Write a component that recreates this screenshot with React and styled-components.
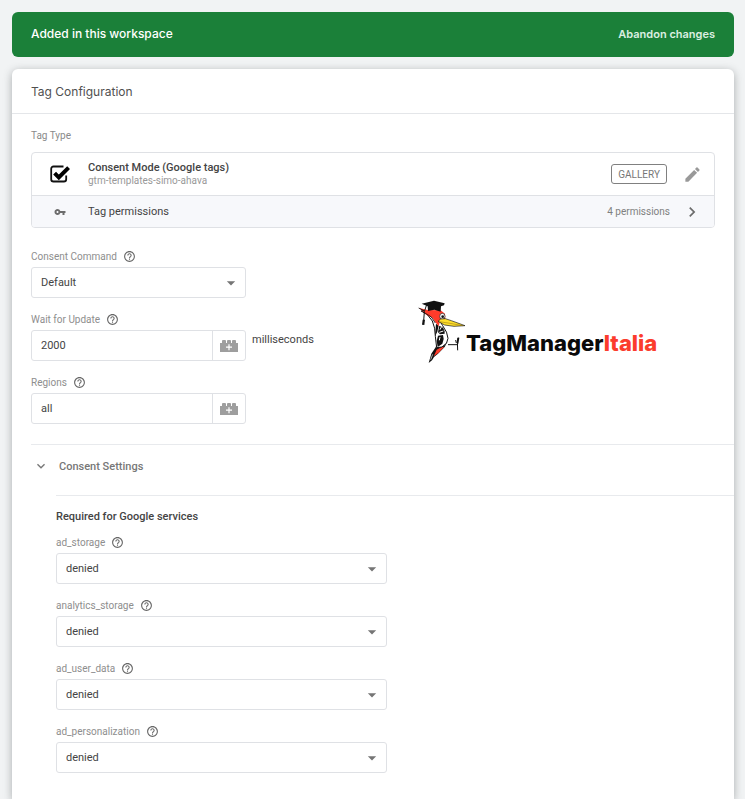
import React, { useState } from 'react'
import styled, { createGlobalStyle } from 'styled-components'
import {
  MdArrowDropDown,
  MdChevronRight,
  MdEdit,
  MdExpandMore,
  MdHelpOutline,
  MdVpnKey,
} from 'react-icons/md'

const consentTypes = ['ad_storage', 'analytics_storage', 'ad_user_data', 'ad_personalization']

const CheckIcon = () => (
  <svg width='20' height='18' viewBox='0 0 20 18' fill='none' aria-hidden='true'>
    <path d='M13.5 1.5H3.5a2.3 2.3 0 0 0-2.3 2.3v10.4a2.3 2.3 0 0 0 2.3 2.3h10.4a2.3 2.3 0 0 0 2.3-2.3V10.5' stroke='#111' strokeWidth='1.8' />
    <path d='M4.6 8.2l4.2 4.2L18.6 2.6' stroke='#000' strokeWidth='4' />
  </svg>
)

const BrickIcon = () => (
  <svg width='18' height='12' viewBox='0 0 18 12' aria-hidden='true'>
    <path d='M0 3h2V1q0-1 1-1h2q1 0 1 1v2h1V1q0-1 1-1h2q1 0 1 1v2h1V1q0-1 1-1h2q1 0 1 1v2h2v9H0z' fill='#9e9e9e' />
    <path d='M9 4.2v6M6 7.2h6' stroke='#fff' strokeWidth='1.2' />
  </svg>
)

const Woodpecker = () => (
  <svg width='48' height='65' viewBox='24 15 144 195' aria-hidden='true'>
    {/* tail */}
    <path d='M84 140L76 158L64 176L56 204L66 196L72 186L84 176L104 156L112 140Z' fill='#111' />
    <path d='M80 164L74 178L71 184L86 173L102 156L96 155Z' fill='#ff3b2a' />
    <path d='M68 178L62 194' stroke='#fff' strokeWidth='2' />
    {/* body */}
    <path d='M38 50Q55 58 67 78Q76 98 76 124L80 158L96 156Q114 146 114 130Q113 112 98 92L80 62Z' fill='#fff' stroke='#111' strokeWidth='3' />
    <path d='M78 86L75 124L82 110L86 92Z' fill='#111' />
    <path d='M88 92L99 98Q106 108 104 116L90 118L84 112Z' fill='#111' />
    <path d='M88 112L100 108M94 96L90 104' stroke='#fff' strokeWidth='3' />
    <path d='M84 122L99 120L101 132L97 146L83 156L80 138Z' fill='#111' />
    <path d='M90 126L88 136' stroke='#fff' strokeWidth='3' />
    {/* head and crest */}
    <path d='M27 39L54 45L92 46L105 56L106 72L90 79L86 94L75 80L68 69L50 60Z' fill='#ff3b2a' />
    <path d='M26 39L42 47L33 48L48 56L64 66L76 84' fill='none' stroke='#111' strokeWidth='2.5' />
    <ellipse cx='97' cy='64' rx='8' ry='9' fill='#fff' stroke='#111' strokeWidth='2' />
    <circle cx='98' cy='65' r='4' fill='#111' />
    {/* beak */}
    <path d='M84 79L92 72L106 71L124 77L165 92L132 94L104 90Z' fill='#ffdf2b' stroke='#111' strokeWidth='2' />
    <path d='M88 80L120 85L158 92' fill='none' stroke='#8a6b10' strokeWidth='1.5' />
    {/* graduation cap */}
    <path d='M35 26L72 17L104 25L102 31L93 34L92 50L73 44L54 48L53 34Z' fill='#111' />
    <path d='M50 29L43 50L41 78' fill='none' stroke='#111' strokeWidth='3' />
    <path d='M38 74L45 74L43 90L36 89Z' fill='#111' />
    {/* feet */}
    <path d='M114 149H143M145 128L142 138L143 166M137 135L139 144' fill='none' stroke='#111' strokeWidth='3' />
    <path d='M142 128H148L145 146H141Z' fill='#111' />
  </svg>
)

const HelpLabel = ({ id, children }) => (
  <LabelRow>
    <Label htmlFor={id}>{children}</Label>
    <HelpButton type='button' aria-label={`Help: ${children}`}>
      <MdHelpOutline size={13} />
    </HelpButton>
  </LabelRow>
)

const SelectField = ({ label, options }) => {
  const [value, setValue] = useState(options[0])
  return (
    <Field>
      <HelpLabel id={label}>{label}</HelpLabel>
      <SelectBox>
        <Select id={label} value={value} onChange={(e) => setValue(e.target.value)}>
          {options.map((option) => <option key={option}>{option}</option>)}
        </Select>
        <MdArrowDropDown size={20} />
      </SelectBox>
    </Field>
  )
}

const VariableField = ({ label, initial, unit }) => {
  const [value, setValue] = useState(initial)
  return (
    <Field>
      <HelpLabel id={label}>{label}</HelpLabel>
      <InputRow>
        <InputBox>
          <Input id={label} value={value} onChange={(e) => setValue(e.target.value)} />
          <VariableButton type='button' aria-label='Insert variable'><BrickIcon /></VariableButton>
        </InputBox>
        {unit && <Unit>{unit}</Unit>}
      </InputRow>
    </Field>
  )
}

const App = () => {
  const [open, setOpen] = useState(true)

  return (
    <Page>
      <GlobalStyle />
      <Banner>
        <BannerText>Added in this workspace</BannerText>
        <AbandonButton type='button'>Abandon changes</AbandonButton>
      </Banner>
      <Card>
        <CardHeader><Title>Tag Configuration</Title></CardHeader>
        <Body>
          <Caption>Tag Type</Caption>
          <TypeBox>
            <TypeRow>
              <IconCell><CheckIcon /></IconCell>
              <TypeInfo>
                <TypeName>Consent Mode (Google tags)</TypeName>
                <TypeAuthor>gtm-templates-simo-ahava</TypeAuthor>
              </TypeInfo>
              <GalleryButton type='button'>GALLERY</GalleryButton>
              <EditButton type='button' aria-label='Edit tag type'><MdEdit size={19} /></EditButton>
            </TypeRow>
            <PermissionsRow type='button'>
              <IconCell><MdVpnKey size={12} /></IconCell>
              <PermissionsName>Tag permissions</PermissionsName>
              <PermissionsCount>4 permissions</PermissionsCount>
              <MdChevronRight size={20} />
            </PermissionsRow>
          </TypeBox>

          <Settings>
            <Fields>
              <SelectField label='Consent Command' options={['Default', 'Update']} />
              <VariableField label='Wait for Update' initial='2000' unit='milliseconds' />
              <VariableField label='Regions' initial='all' />
            </Fields>
            <Logo>
              <Woodpecker />
              <LogoText>TagManager<span>Italia</span></LogoText>
            </Logo>
          </Settings>

          <Section>
            <SectionToggle type='button' aria-expanded={open} onClick={() => setOpen(!open)}>
              <MdExpandMore size={16} />
              Consent Settings
            </SectionToggle>
            {open && (
              <SectionBody>
                <GroupTitle>Required for Google services</GroupTitle>
                <ConsentFields>
                  {consentTypes.map((type) => (
                    <SelectField key={type} label={type} options={['denied', 'granted']} />
                  ))}
                </ConsentFields>
              </SectionBody>
            )}
          </Section>
        </Body>
      </Card>
    </Page>
  )
}

export default App

const GlobalStyle = createGlobalStyle`
  * {
    box-sizing: border-box;
  }
  body {
    margin: 0;
    background: #f1f3f4;
    color: #444;
    font-family: Roboto, 'Liberation Sans', sans-serif;
    font-size: 11px;
  }
  button, input, select {
    margin: 0;
    padding: 0;
    border: none;
    background: none;
    color: inherit;
    font: inherit;
  }
  button {
    cursor: pointer;
  }
  svg {
    display: block;
    flex: none;
  }
`

const Page = styled.div`
  display: flex;
  flex-direction: column;
  gap: 12px;
  min-height: 100vh;
  padding: 12px 11px 0 12px;
`

const Banner = styled.div`
  display: flex;
  align-items: center;
  justify-content: space-between;
  height: 45px;
  padding: 0 19px 2px;
  border-radius: 6px;
  background: #1b8039;
  color: #fff;
  font-family: Inter, Roboto, sans-serif;
`

const BannerText = styled.span`
  font-size: 12px;
  font-weight: 500;
`

const AbandonButton = styled.button`
  color: #dcefe1;
  font-size: 11px;
  font-weight: 600;
`

const Card = styled.main`
  flex: 1;
  border-radius: 6px 6px 0 0;
  background: #fff;
  box-shadow: 0 2px 8px rgba(60, 64, 67, 0.4);
`

const CardHeader = styled.header`
  display: flex;
  align-items: center;
  height: 45px;
  padding: 0 19px;
  border-bottom: 1px solid #e4e6e9;
`

const Title = styled.h1`
  margin: 0;
  color: #505050;
  font-family: Inter, Roboto, sans-serif;
  font-size: 12px;
  font-weight: 400;
`

const Body = styled.div`
  padding: 14px 0 20px 19px;
`

const Caption = styled.div`
  color: #8a8a8a;
  font-size: 10px;
  line-height: 16px;
`

const TypeBox = styled.section`
  margin: 8px 19px 0 0;
  border: 1px solid #dfe1e5;
  border-radius: 4px;
  overflow: hidden;
`

const TypeRow = styled.div`
  display: flex;
  align-items: center;
  height: 42px;
  padding-right: 12px;
`

const IconCell = styled.span`
  display: flex;
  justify-content: center;
  width: 56px;
`

const TypeInfo = styled.div`
  flex: 1;
`

const TypeName = styled.div`
  font-weight: 500;
  line-height: 14px;
`

const TypeAuthor = styled.div`
  color: #999;
  font-size: 10px;
  line-height: 12px;
`

const GalleryButton = styled.button`
  height: 20px;
  padding: 0 6px;
  border: 1px solid #808080;
  border-radius: 3px;
  color: #777;
  font-size: 10px;
`

const EditButton = styled.button`
  margin-left: 16px;
  color: #999;
`

const PermissionsRow = styled.button`
  display: flex;
  align-items: center;
  width: 100%;
  height: 32px;
  padding-right: 12px;
  border-top: 1px solid #dfe1e5;
  background: #f7f8fb;
  text-align: left;

  svg {
    color: #6c6c6c;
  }
`

const PermissionsName = styled.span`
  flex: 1;
`

const PermissionsCount = styled.span`
  margin-right: 12px;
  color: #808080;
  font-size: 10px;
`

const Settings = styled.div`
  display: flex;
  gap: 72px;
  margin-top: 20px;
`

const Fields = styled.div`
  display: flex;
  flex-direction: column;
  gap: 13px;
  width: 315px;
`

const Field = styled.div`
  display: flex;
  flex-direction: column;
  gap: 3px;
`

const LabelRow = styled.div`
  display: flex;
  align-items: center;
  gap: 6px;
  height: 16px;
`

const Label = styled.label`
  color: #8e8e8e;
  font-size: 10px;
`

const HelpButton = styled.button`
  color: #666;
`

const SelectBox = styled.div`
  position: relative;
  width: 215px;

  svg {
    position: absolute;
    top: 6px;
    right: 5px;
    color: #757575;
    pointer-events: none;
  }
`

const Select = styled.select`
  appearance: none;
  width: 100%;
  height: 31px;
  padding: 0 9px;
  border: 1px solid #dfe1e5;
  border-radius: 3px;
`

const InputRow = styled.div`
  display: flex;
  gap: 6px;
`

const InputBox = styled.div`
  display: flex;
  width: 215px;
  height: 31px;
  border: 1px solid #dfe1e5;
  border-radius: 3px;
`

const Input = styled.input`
  flex: 1;
  min-width: 0;
  padding: 0 9px;
`

const VariableButton = styled.button`
  display: flex;
  align-items: center;
  justify-content: center;
  width: 33px;
  border-left: 1px solid #dfe1e5;
`

const Unit = styled.span`
  line-height: 20px;
`

const Logo = styled.div`
  display: flex;
  align-self: flex-start;
  margin-top: 52px;
`

const LogoText = styled.div`
  padding-top: 29px;
  color: #0a0a0a;
  font-family: Inter, 'Open Sans', sans-serif;
  font-size: 22px;
  font-weight: 800;
  line-height: 28px;

  span {
    color: #fb3c2d;
  }
`

const Section = styled.section`
  margin-top: 20px;
  border-top: 1px solid #e8eaed;
`

const SectionToggle = styled.button`
  display: flex;
  align-items: center;
  gap: 10px;
  height: 42px;
  padding-left: 2px;
  color: #777;
  font-weight: 500;
`

const SectionBody = styled.div`
  margin: 8px 0 0 25px;
  border-top: 1px solid #e8eaed;
`

const GroupTitle = styled.h2`
  margin: 13px 0 9px;
  font-size: 11px;
  font-weight: 500;
  line-height: 16px;
`

const ConsentFields = styled(Fields)`
  ${SelectBox} {
    width: 331px;
  }
`
